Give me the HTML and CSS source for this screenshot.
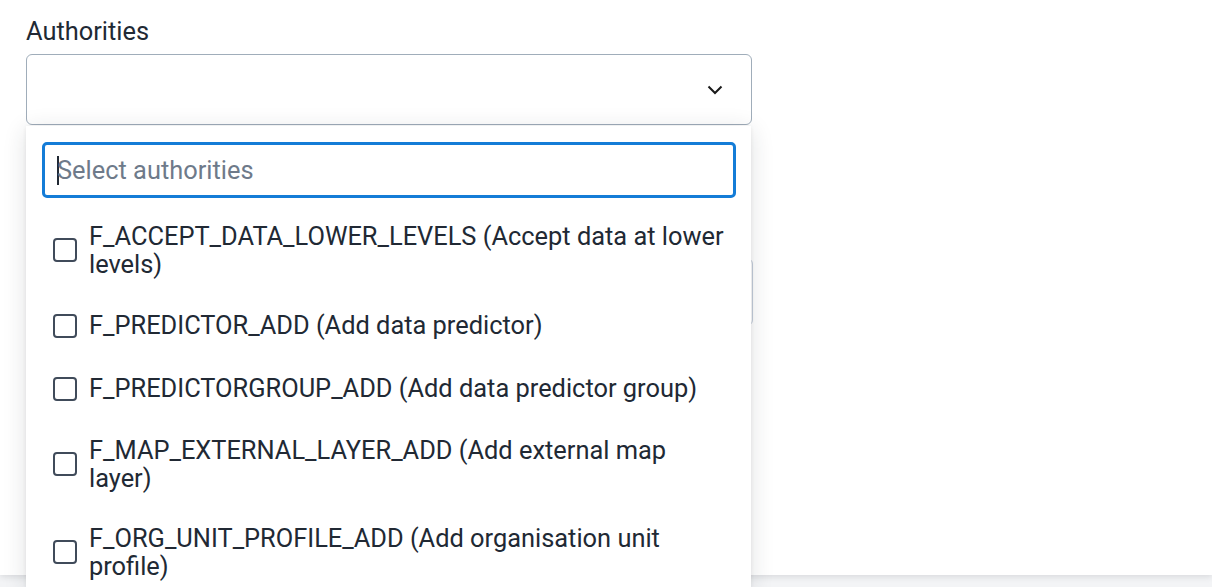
FILE: index.html
```html
<!DOCTYPE html>
<html>
<head>
<meta charset="utf-8">
<link rel="stylesheet" href="styles.css">
</head>
<body>
<div class="page">
  <div class="content">
    <div class="field">
      <label class="label">Authorities</label>
      <div class="select">
        <svg class="chevron" width="16" height="10" viewBox="0 0 16 10"><path d="M1.5 1.5 L8 8 L14.5 1.5" fill="none" stroke="#1a1a1a" stroke-width="2"/></svg>
      </div>
      <div class="dropdown">
        <div class="search"><span class="caret"></span><span class="placeholder">Select authorities</span></div>
        <ul class="options">
          <li class="option"><span class="box"></span><span class="text">F_ACCEPT_DATA_LOWER_LEVELS (Accept data at lower levels)</span></li>
          <li class="option"><span class="box"></span><span class="text">F_PREDICTOR_ADD (Add data predictor)</span></li>
          <li class="option"><span class="box"></span><span class="text">F_PREDICTORGROUP_ADD (Add data predictor group)</span></li>
          <li class="option"><span class="box"></span><span class="text">F_MAP_EXTERNAL_LAYER_ADD (Add external map layer)</span></li>
          <li class="option"><span class="box"></span><span class="text">F_ORG_UNIT_PROFILE_ADD (Add organisation unit profile)</span></li>
        </ul>
      </div>
    </div>
    <div class="hidden-field"></div>
  </div>
  <div class="footer"></div>
</div>
</body>
</html>
```

FILE: styles.css
```css
* { box-sizing: border-box; }
html, body { margin: 0; padding: 0; }
body {
  font-family: Roboto, "Liberation Sans", sans-serif;
  color: #212934;
  background: #f3f4f6;
  width: 1212px;
  height: 587px;
  overflow: hidden;
}
.page { position: relative; }
.content {
  background: #ffffff;
  height: 575px;
  padding: 15px 0 0 26px;
  box-shadow: 0 2px 6px rgba(33, 41, 52, 0.12);
  position: relative;
  z-index: 1;
}
.field { position: relative; width: 726px; }
.label {
  display: block;
  font-size: 25.4px;
  line-height: 32px;
  margin-bottom: 7px;
}
.select {
  height: 71px;
  border: 1px solid #a0adba;
  border-radius: 6px;
  display: flex;
  align-items: center;
  justify-content: flex-end;
  padding-right: 28px;
}
.chevron { display: block; }
.hidden-field {
  margin-top: 133px;
  width: 727px;
  height: 68px;
  border: 1px solid #c4cedb;
  border-radius: 6px;
}
.dropdown {
  position: absolute;
  top: 111px;
  left: 0;
  width: 725px;
  height: 461px;
  overflow: hidden;
  background: #ffffff;
  box-shadow: 0 4px 22px rgba(33, 41, 52, 0.14), 0 1px 4px rgba(33, 41, 52, 0.08);
  padding: 16px 15px 0 16px;
  z-index: 5;
}
.search {
  height: 56px;
  border: 3px solid #147cd7;
  border-radius: 5px;
  display: flex;
  align-items: center;
  padding-left: 12px;
  font-size: 25.4px;
}
.caret {
  display: inline-block;
  width: 2px;
  height: 29px;
  background: #212934;
  margin-right: -2px;
}
.placeholder { color: #6e7a8a; }
.options {
  list-style: none;
  margin: 8px 0 0 0;
  padding: 0;
}
.option {
  display: flex;
  align-items: center;
  min-height: 63px;
  padding: 15.5px 0 15.5px 11px;
  font-size: 25.4px;
  line-height: 28.5px;
}
.box {
  flex: none;
  width: 24px;
  height: 24px;
  border: 2px solid #404b5a;
  border-radius: 4px;
  margin-right: 12px;
}
.text { flex: none; width: 640px; }
.footer { height: 12px; }
```
